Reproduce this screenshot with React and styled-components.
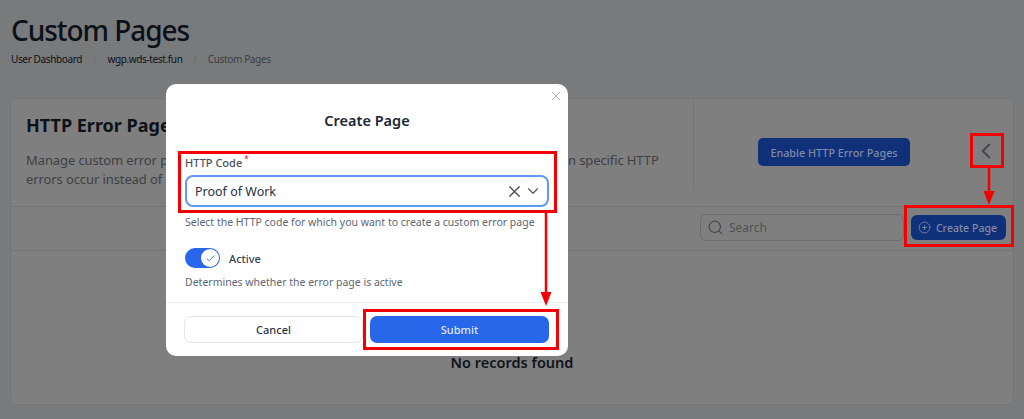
import React from "react";
import styled, { createGlobalStyle } from "styled-components";
import { X, ChevronDown, ChevronLeft, Search, CirclePlus, Check } from "lucide-react";

const Global = createGlobalStyle`
  html, body { margin: 0; padding: 0; background: #797a7b; }
  body { font-family: "Noto Sans", "Open Sans", sans-serif; overflow: hidden; }
  * { box-sizing: border-box; }
`;

const Page = styled.div`
  position: relative;
  width: 1024px;
  height: 419px;
  padding: 14px 10px 14px 10px;
  overflow: hidden;
  display: flex;
  flex-direction: column;
`;
const Title = styled.h1`
  margin: 0;
  padding-left: 1px;
  font-size: 28px;
  line-height: 32px;
  font-weight: 500;
  letter-spacing: -1.05px;
  color: #0c1119;
`;
const Crumbs = styled.nav`
  display: flex;
  align-items: center;
  margin-top: 6px;
  padding-left: 1px;
  height: 14px;
  font-size: 10px;
  letter-spacing: -0.37px;
  color: #0c1119;
`;
const CrumbSep = styled.span`
  margin: 0 11px 0 11px;
  color: #6c6d6f;
`;
const CrumbLast = styled.span`
  color: #3c3f44;
`;
const Card = styled.section`
  margin-top: 32px;
  flex: 1;
  background: #7f7f7f;
  border: 1px solid #757677;
  border-radius: 6px;
  display: flex;
  flex-direction: column;
`;
const CardTop = styled.div`
  height: 108px;
  display: flex;
  border-bottom: 1px solid #737475;
`;
const Intro = styled.div`
  width: 683px;
  margin-bottom: 16px;
  padding: 14px 15px;
  border-right: 1px solid #757677;
`;
const CardTitle = styled.h2`
  margin: 0;
  font-size: 18px;
  line-height: 24px;
  font-weight: 700;
  color: #0e1217;
  white-space: nowrap;
`;
const CardText = styled.p`
  margin: 14px 0 0;
  font-size: 13px;
  line-height: 19px;
  letter-spacing: -0.1px;
  color: #3e4044;
  white-space: pre;
`;
const EnableWrap = styled.div`
  flex: 1;
  padding: 39px 0 0 64px;
`;
const Enable = styled.button`
  width: 152px;
  height: 28px;
  padding: 0;
  border: 0;
  border-radius: 5px;
  background: #11307a;
  color: #7f8ba8;
  font: 500 10.8px "Noto Sans", sans-serif;
`;
const Toolbar = styled.div`
  height: 44px;
  display: flex;
  justify-content: flex-end;
  align-items: center;
  gap: 7px;
  padding: 0 7px 2px 0;
  border-bottom: 1px solid #737475;
`;
const SearchBox = styled.div`
  width: 204px;
  height: 27px;
  display: flex;
  align-items: center;
  gap: 5px;
  padding-left: 6px;
  border: 1px solid #6c6d6e;
  border-radius: 6px;
  font-size: 12px;
  color: #505255;
`;
const SearchIcon = styled(Search)`
  color: #45474a;
`;
const CreateBtn = styled.button`
  width: 95px;
  height: 25px;
  padding: 0 2px 0 0;
  border: 0;
  border-radius: 6px;
  background: #11307a;
  color: #7f8ba8;
  font: 500 10.6px "Noto Sans", sans-serif;
  display: flex;
  align-items: center;
  justify-content: center;
  gap: 5px;
  white-space: nowrap;
`;
const Empty = styled.div`
  flex: 1;
  display: flex;
  justify-content: center;
  align-items: flex-start;
  padding-top: 101px;
  font-size: 14.5px;
  font-weight: 600;
  color: #10141b;
`;
const Collapse = styled.span`
  position: absolute;
  left: 973px;
  top: 138px;
  display: flex;
  color: #45474b;
`;
const Modal = styled.div`
  position: absolute;
  left: 166px;
  top: 84px;
  width: 402px;
  height: 272px;
  background: #fff;
  border-radius: 10px;
  display: flex;
  flex-direction: column;
`;
const Close = styled.span`
  position: absolute;
  right: 5px;
  top: 5px;
  display: flex;
  color: #a3a7ad;
`;
const ModalTitle = styled.h3`
  margin: 26px 0 0;
  text-align: center;
  font-size: 14.5px;
  line-height: 20px;
  font-weight: 600;
  color: #1d2735;
`;
const ModalBody = styled.div`
  padding: 0 19px;
  display: flex;
  flex-direction: column;
  height: 173px;
  border-bottom: 1px solid #eceef0;
`;
const Label = styled.label`
  margin-top: 26px;
  font-size: 11px;
  line-height: 14px;
  font-weight: 500;
  color: #4a5261;
`;
const Req = styled.sup`
  color: #ef2b2b;
  font-size: 8px;
  line-height: 0;
  margin-left: 2px;
`;
const SelectBox = styled.div`
  margin-top: 5px;
  height: 32px;
  border: 2px solid #5f9bf3;
  border-radius: 8px;
  padding: 0 5px 0 8px;
  display: flex;
  align-items: center;
  justify-content: space-between;
  font-size: 12.5px;
  color: #273142;
`;
const SelectIcons = styled.span`
  display: flex;
  align-items: center;
  color: #4b5565;
`;
const Help = styled.p`
  margin: 8px 0 0;
  font-size: 10.5px;
  line-height: 14px;
  color: #5e6673;
  white-space: nowrap;
`;
const ToggleRow = styled.div`
  margin-top: 19px;
  display: flex;
  align-items: center;
  gap: 9px;
  font-size: 11px;
  font-weight: 500;
  color: #3a4352;
`;
const Track = styled.span`
  width: 35px;
  height: 20px;
  border-radius: 10px;
  background: #2866ea;
  display: flex;
  justify-content: flex-end;
  align-items: center;
  padding-right: 1px;
`;
const Knob = styled.span`
  width: 18px;
  height: 18px;
  border-radius: 50%;
  background: #fff;
  display: flex;
  align-items: center;
  justify-content: center;
  color: #2866ea;
`;
const Help2 = styled(Help)`
  margin-top: 7px;
`;
const Footer = styled.div`
  display: grid;
  grid-template-columns: 179px 179px;
  gap: 7px;
  padding: 13px 18px 0;
`;
const Cancel = styled.button`
  height: 27px;
  border: 1px solid #e3e5e8;
  border-radius: 7px;
  background: #fff;
  color: #2b3442;
  font: 500 11px "Noto Sans", sans-serif;
`;
const Submit = styled.button`
  height: 27px;
  border: 0;
  border-radius: 7px;
  background: #2866ea;
  color: #dfe8fb;
  font: 500 11px "Noto Sans", sans-serif;
`;
const RedBox = styled.div`
  position: absolute;
  left: ${p => p.$l}px;
  top: ${p => p.$t}px;
  width: ${p => p.$w}px;
  height: ${p => p.$h}px;
  border: 3px solid #f40000;
  pointer-events: none;
`;
const Arrows = styled.svg`
  position: absolute;
  left: 0;
  top: 0;
  pointer-events: none;
`;

export default function App() {
  return (
    <Page>
      <Global />
      <Title>Custom Pages</Title>
      <Crumbs>
        <span>User Dashboard</span>
        <CrumbSep>/</CrumbSep>
        <span>wgp.wds-test.fun</span>
        <CrumbSep>/</CrumbSep>
        <CrumbLast>Custom Pages</CrumbLast>
      </Crumbs>
      <Card>
        <CardTop>
          <Intro>
            <CardTitle>HTTP Error Pages</CardTitle>
            <CardText>{"Manage custom error pages that will be displayed to all of the visitors of your website when specific HTTP\nerrors occur instead of the default pages"}</CardText>
          </Intro>
          <EnableWrap>
            <Enable>Enable HTTP Error Pages</Enable>
          </EnableWrap>
        </CardTop>
        <Toolbar>
          <SearchBox><SearchIcon size={17} strokeWidth={1.6} />Search</SearchBox>
          <CreateBtn><CirclePlus size={13} strokeWidth={1.5} />Create Page</CreateBtn>
        </Toolbar>
        <Empty>No records found</Empty>
      </Card>
      <Collapse><ChevronLeft size={26} strokeWidth={1.8} /></Collapse>

      <Modal>
        <Close><X size={14} strokeWidth={1.6} /></Close>
        <ModalTitle>Create Page</ModalTitle>
        <ModalBody>
          <Label>HTTP Code<Req>*</Req></Label>
          <SelectBox>
            Proof of Work
            <SelectIcons>
              <X size={19} strokeWidth={1.8} />
              <ChevronDown size={18} strokeWidth={1.5} />
            </SelectIcons>
          </SelectBox>
          <Help>Select the HTTP code for which you want to create a custom error page</Help>
          <ToggleRow>
            <Track><Knob><Check size={11} strokeWidth={1.8} /></Knob></Track>
            Active
          </ToggleRow>
          <Help2>Determines whether the error page is active</Help2>
        </ModalBody>
        <Footer>
          <Cancel>Cancel</Cancel>
          <Submit>Submit</Submit>
        </Footer>
      </Modal>

      <RedBox $l={178} $t={151} $w={379} $h={62} />
      <RedBox $l={363} $t={309} $w={196} $h={41} />
      <RedBox $l={970} $t={133} $w={34} $h={35} />
      <RedBox $l={904} $t={205} $w={110} $h={42} />
      <Arrows width="1024" height="419" viewBox="0 0 1024 419">
        <path d="M546 213V294M989 168V193" stroke="#f40000" strokeWidth="2.5" fill="none" />
        <path d="M540.5 292H551.5L546 306ZM983.5 191H994.5L989 205Z" fill="#f40000" />
      </Arrows>
    </Page>
  );
}
